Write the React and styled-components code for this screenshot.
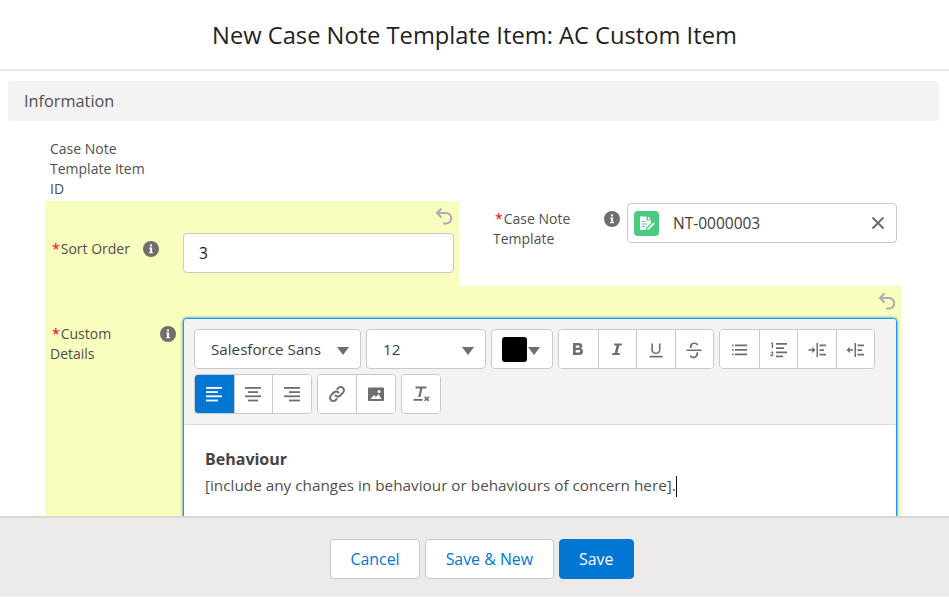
import React from 'react';
import styled, { createGlobalStyle } from 'styled-components';

const GlobalStyle = createGlobalStyle`
  html, body {
    margin: 0;
    padding: 0;
    background: #fff;
  }
  * { box-sizing: border-box; }
`;

const Page = styled.div`
  width: 949px;
  height: 597px;
  display: flex;
  flex-direction: column;
  overflow: hidden;
  font-family: "Open Sans", "Noto Sans", sans-serif;
  font-size: 14px;
  color: #3e3e3c;
`;

const Header = styled.header`
  height: 71px;
  flex: none;
  display: flex;
  align-items: center;
  justify-content: center;
  border-bottom: 2px solid #e5e5e5;

  h1 {
    margin: 0;
    font-size: 23.7px;
    font-weight: 400;
    line-height: 30px;
    color: #1f1f1f;
  }
`;

const Body = styled.main`
  flex: 1;
  min-height: 0;
  overflow: hidden;
  padding: 10px 10px 0 8px;
`;

const SectionTitle = styled.div`
  height: 40px;
  padding: 0 16px;
  display: flex;
  align-items: center;
  border-radius: 4px;
  background: #f3f3f3;
  font-size: 16.3px;
  color: #514f4d;
`;

const Form = styled.div`
  padding: 18px 0 0 37px;
`;

const IdLabel = styled.div`
  width: 110px;
  padding-left: 5px;
  height: 62px;
  line-height: 20px;
  color: #514f4d;
`;

const FieldRow = styled.div`
  display: flex;
  align-items: stretch;
`;

const Highlight = styled.div`
  background: #f9fdbd;
  padding: 6px 5px 0 5px;
  width: ${(p) => p.$width}px;
  height: ${(p) => p.$height}px;
  flex: none;
`;

const UndoRow = styled.div`
  height: 18px;
  margin-bottom: 8px;
  display: flex;
  justify-content: flex-end;
  padding-right: 1px;
  color: #b0adab;
`;

const Field = styled.div`
  display: flex;
  align-items: flex-start;
`;

const LabelCell = styled.div`
  width: ${(p) => p.$width}px;
  flex: none;
  display: flex;
  align-items: flex-start;
  justify-content: space-between;
  padding-top: 6px;
  margin-right: ${(p) => p.$gap}px;
`;

const LabelText = styled.label`
  line-height: 20px;
  color: #514f4d;
`;

const Star = styled.abbr`
  color: #ea001e;
  margin-left: 2px;
  margin-right: 1px;
  text-decoration: none;
`;

const InfoWrap = styled.span`
  display: flex;
  margin-top: 2px;
`;

const TextInput = styled.div`
  flex: 1;
  height: 40px;
  border: 1px solid #c9c9c9;
  border-radius: 4px;
  background: #fff;
  padding: 0 15px;
  display: flex;
  align-items: center;
  font-size: 15.5px;
  color: #181818;
`;

const RightField = styled.div`
  padding: 2px 0 0 34px;
  width: 438px;
  flex: none;
`;

const LookupInput = styled(TextInput)`
  padding: 0 11px 0 6px;
  justify-content: space-between;
  color: #3e3e3c;
`;

const LookupValue = styled.span`
  display: flex;
  align-items: center;
  gap: 14px;
`;

const ClearIcon = styled.span`
  display: flex;
  color: #706e6b;
`;

const Editor = styled.div`
  flex: 1;
  height: 300px;
  border: 1px solid #1b96ff;
  border-radius: 4px;
  box-shadow: 0 0 3px #0176d3;
  background: #fff;
  overflow: hidden;
`;

const Toolbar = styled.div`
  height: 106px;
  padding: 10px 10px 0;
  background: #f3f3f3;
  border-bottom: 1px solid #dddbda;
  display: flex;
  flex-wrap: wrap;
  align-content: flex-start;
  gap: 5px;
`;

const Select = styled.div`
  width: ${(p) => p.$width}px;
  height: 40px;
  border: 1px solid #c9c9c9;
  border-radius: 4px;
  background: #fff;
  display: flex;
  align-items: center;
  justify-content: space-between;
  padding: 0 11px 0 16px;
  font-size: 15.2px;
  color: #3e3e3c;
`;

const Caret = styled.span`
  width: 0;
  height: 0;
  margin-top: 3px;
  border-left: 6.5px solid transparent;
  border-right: 6.5px solid transparent;
  border-top: 8px solid #706e6b;
`;

const ColorSelect = styled(Select)`
  padding: 0 0 0 10px;
  justify-content: flex-start;
  gap: 1px;
`;

const Swatch = styled.span`
  width: 25px;
  height: 25px;
  border-radius: 3px;
  background: #000;
`;

const BtnGroup = styled.div`
  display: flex;
  height: 40px;
  border: 1px solid #c9c9c9;
  border-radius: 4px;
  background: #fff;
  overflow: hidden;
`;

const ToolBtn = styled.button`
  width: 38.5px;
  height: 100%;
  padding: 0;
  border: none;
  border-left: 1px solid #c9c9c9;
  background: ${(p) => (p.$active ? '#0176d3' : '#fff')};
  color: ${(p) => (p.$active ? '#fff' : '#706e6b')};
  display: flex;
  align-items: center;
  justify-content: center;

  &:first-child {
    border-left: none;
  }
`;

const EditorBody = styled.div`
  padding: 22px 21px;
  color: #444;
`;

const NoteHeading = styled.div`
  font-size: 16px;
  font-weight: 700;
  line-height: 24px;
`;

const NoteLine = styled.div`
  font-size: 15.3px;
  line-height: 28px;
  color: #514f4d;
`;

const Cursor = styled.span`
  display: inline-block;
  width: 1px;
  height: 21px;
  background: #111;
  vertical-align: middle;
`;

const Footer = styled.footer`
  height: 81px;
  flex: none;
  background: #ecebea;
  border-top: 2px solid #d8d8d8;
  border-bottom: 1px solid #f3f2f2;
  padding: 3px 0 0 15px;
  display: flex;
  align-items: center;
  justify-content: center;
  gap: 5px;
`;

const Button = styled.button`
  height: 40px;
  padding: 0 19.5px;
  border: 1px solid ${(p) => (p.$brand ? '#0176d3' : '#c9c9c9')};
  border-radius: 4px;
  background: ${(p) => (p.$brand ? '#0176d3' : '#fff')};
  color: ${(p) => (p.$brand ? '#fff' : '#0176d3')};
  font-family: inherit;
  font-size: 15.9px;
`;

const Svg = ({ children }) => (
  <svg width="20" height="20" viewBox="0 0 20 20" fill="currentColor" aria-hidden="true">
    {children}
  </svg>
);

const Undo = () => (
  <svg width="18" height="18" viewBox="0 0 18 18" fill="none" stroke="currentColor" strokeWidth="2">
    <path d="M6.5 1.5 2 6l4.5 4.5" />
    <path d="M2 6h9a5 5 0 0 1 0 10.5H8" />
  </svg>
);

const Info = () => (
  <svg width="16" height="16" viewBox="0 0 16 16">
    <circle cx="8" cy="8" r="8" fill="#706e6b" />
    <rect x="6.9" y="3.2" width="2.2" height="2.2" rx="1" fill="#fff" />
    <path d="M6.2 6.5h2.9v4.6h.8v1.2H6.2v-1.2h.8V7.7h-.8z" fill="#fff" />
  </svg>
);

const NoteIcon = () => (
  <svg width="25" height="25" viewBox="0 0 25 25">
    <rect width="25" height="25" rx="4" fill="#4bca81" />
    <path d="M6 5.500h6.500v4H17V12l-4.500 4.500-.7 2.500H6z" fill="#fff" />
    <path d="M14 5.500 17 8.500h-3z" fill="#fff" />
    <path d="M8 10.500h3M8 13h5M8 15.500h3" stroke="#4bca81" strokeWidth="1.200" />
    <path d="M19.500 11.500l1.300 1.300-5.800 5.800-1.700.4.400-1.700z" fill="#fff" />
  </svg>
);

const Cross = () => (
  <svg width="14" height="14" viewBox="0 0 14 14" stroke="currentColor" strokeWidth="2" fill="none">
    <path d="M1.500 1.500l11 11M12.500 1.500l-11 11" />
  </svg>
);

const Bold = () => (
  <Svg>
    <path fillRule="evenodd" d="M5 4h5.600c2.300 0 3.700 1.100 3.700 3 0 1.100-.6 2-1.500 2.500 1.300.5 2.200 1.500 2.200 2.900 0 2.200-1.600 3.600-4 3.600H5zm2.700 2.400v2.300h2.500c1 0 1.500-.4 1.500-1.200s-.5-1.100-1.500-1.100zm0 4.500v2.700h2.800c1.100 0 1.700-.5 1.700-1.400s-.6-1.300-1.700-1.300z" />
  </Svg>
);

const Italic = () => (
  <Svg>
    <path d="M7.200 4.500h7.600v2h-2.500l-1.900 7.500h2.400v2H5.200v-2h2.500l1.900-7.500H7.200z" />
  </Svg>
);

const Underline = () => (
  <Svg>
    <path d="M5.300 4.500h1.600v6.200c0 1.900 1.200 2.800 3 2.800s3-.9 3-2.800V4.500h1.600v6.300c0 2.800-1.900 4.200-4.600 4.200s-4.600-1.400-4.600-4.200zM3.500 16.800h13v1.700h-13z" />
  </Svg>
);

const Strike = () => (
  <Svg>
    <path d="M2.500 10.500h15v1.500h-15zM5.800 9.100C5.400 5.600 7.500 3.500 10.200 3.500c1.800 0 3.300.8 4.100 2.200l-1.400.9c-.5-1-1.500-1.500-2.600-1.500-1.800 0-2.900 1.500-2.500 4zM12.500 13.200h1.700c.3 3.500-1.700 6-4.400 6-1.800 0-3.300-.9-4.100-2.300l1.400-.9c.5 1 1.500 1.600 2.600 1.600 1.700 0 2.800-1.800 2.800-4.400z" />
  </Svg>
);

const BulletList = () => (
  <Svg>
    <path d="M6 5.500h12v1.800H6zM6 10h12v1.800H6zM6 14.500h12v1.800H6zM3 5.500h1.600v1.800H3zM3 10h1.600v1.800H3zM3 14.500h1.600v1.800H3z" />
  </Svg>
);

const NumberList = () => (
  <Svg>
    <path d="M8 4h11v1.700H8zM8 8.300h8v1.700H8zM8 12.500h11v1.700H8zM8 16.600h7v1.700H8zM3.600 3.500H5v5.400H3.800V4.700H3zM2.400 13.300c.4-.5 1-.7 1.500-.7.900 0 1.500.5 1.500 1.300 0 .9-.9 1.600-1.800 2.400h1.900v1H2.300v-.9c1-.9 1.900-1.600 1.900-2.300 0-.3-.2-.5-.5-.5s-.5.1-.8.4z" />
  </Svg>
);

const IndentIcon = ({ flip }) => (
  <Svg>
    <path d="M9.500 4H11v14H9.500zM12.500 5.500H19v1.700h-6.500zM12.500 10.200H17v1.700h-4.500zM12.500 14.800H19v1.700h-6.500z" />
    {flip ? (
      <path d="M8 10.200H4.800V8L1.500 11l3.300 3v-2.200H8z" />
    ) : (
      <path d="M1.500 10.200h3.700V8L8.500 11l-3.300 3v-2.200H1.500z" />
    )}
  </Svg>
);

const AlignIcon = ({ kind }) => {
  const short = { left: [2, 12], center: [5, 10], right: [7, 11] }[kind];
  return (
    <Svg>
      <rect x="2" y="3" width="16" height="1.800" />
      <rect x={short[0]} y="7.200" width={short[1]} height="1.800" />
      <rect x="2" y="11.400" width="16" height="1.800" />
      <rect x={short[0]} y="15.600" width={short[1]} height="1.800" />
    </Svg>
  );
};

const LinkIcon = () => (
  <svg width="20" height="20" viewBox="0 0 20 20" fill="none" stroke="currentColor" strokeWidth="1.900" strokeLinecap="round">
    <path d="M8.500 11.500a3.200 3.200 0 0 0 4.700 0l2.800-2.800a3.300 3.300 0 0 0-4.700-4.700l-1 1" />
    <path d="M11.500 8.500a3.200 3.200 0 0 0-4.700 0L4 11.300A3.300 3.300 0 0 0 8.700 16l1-1" />
  </svg>
);

const ImageIcon = () => (
  <Svg>
    <path fillRule="evenodd" d="M3 3.500h14a1 1 0 0 1 1 1v11.500a1 1 0 0 1-1 1H3a1 1 0 0 1-1-1V4.500a1 1 0 0 1 1-1zm1.500 11.500h11l-3-5-2.500 3-2-2zM13 6a1.500 1.500 0 1 0 0 3 1.500 1.500 0 0 0 0-3z" />
  </Svg>
);

const ClearFormat = () => (
  <Svg>
    <path d="M4.500 2.500h11v2H11.400l-2 8.500H7.200l2-8.500H4.500zM2.500 15h9v1.800h-9zM13 13.200l1.200-.9 1.500 1.400 1.500-1.400 1.200.9-1.500 1.600 1.500 1.600-1.200.9-1.500-1.400-1.500 1.400-1.200-.9 1.500-1.600z" />
  </Svg>
);

const App = () => {
  return (
    <Page>
      <GlobalStyle />
      <Header>
        <h1>New Case Note Template Item: AC Custom Item</h1>
      </Header>

      <Body>
        <SectionTitle>Information</SectionTitle>
        <Form>
          <IdLabel>Case Note Template Item ID</IdLabel>

          <FieldRow>
            <Highlight $width={414} $height={85}>
              <UndoRow><Undo /></UndoRow>
              <Field>
                <LabelCell $width={109} $gap={24}>
                  <LabelText><Star>*</Star>Sort Order</LabelText>
                  <InfoWrap><Info /></InfoWrap>
                </LabelCell>
                <TextInput>3</TextInput>
              </Field>
            </Highlight>

            <RightField>
              <Field>
                <LabelCell $width={127} $gap={7}>
                  <LabelText><Star>*</Star>Case Note<br />Template</LabelText>
                  <InfoWrap><Info /></InfoWrap>
                </LabelCell>
                <LookupInput>
                  <LookupValue><NoteIcon />NT-0000003</LookupValue>
                  <ClearIcon><Cross /></ClearIcon>
                </LookupInput>
              </Field>
            </RightField>
          </FieldRow>

          <Highlight $width={857} $height={230}>
            <UndoRow><Undo /></UndoRow>
            <Field>
              <LabelCell $width={126} $gap={7}>
                <LabelText><Star>*</Star>Custom<br />Details</LabelText>
                <InfoWrap><Info /></InfoWrap>
              </LabelCell>
              <Editor>
                <Toolbar>
                  <Select $width={167}>Salesforce Sans<Caret /></Select>
                  <Select $width={120}>12<Caret /></Select>
                  <ColorSelect $width={62}><Swatch /><Caret /></ColorSelect>
                  <BtnGroup>
                    <ToolBtn><Bold /></ToolBtn>
                    <ToolBtn><Italic /></ToolBtn>
                    <ToolBtn><Underline /></ToolBtn>
                    <ToolBtn><Strike /></ToolBtn>
                  </BtnGroup>
                  <BtnGroup>
                    <ToolBtn><BulletList /></ToolBtn>
                    <ToolBtn><NumberList /></ToolBtn>
                    <ToolBtn><IndentIcon /></ToolBtn>
                    <ToolBtn><IndentIcon flip /></ToolBtn>
                  </BtnGroup>
                  <BtnGroup>
                    <ToolBtn $active><AlignIcon kind="left" /></ToolBtn>
                    <ToolBtn><AlignIcon kind="center" /></ToolBtn>
                    <ToolBtn><AlignIcon kind="right" /></ToolBtn>
                  </BtnGroup>
                  <BtnGroup>
                    <ToolBtn><LinkIcon /></ToolBtn>
                    <ToolBtn><ImageIcon /></ToolBtn>
                  </BtnGroup>
                  <BtnGroup>
                    <ToolBtn><ClearFormat /></ToolBtn>
                  </BtnGroup>
                </Toolbar>
                <EditorBody>
                  <NoteHeading>Behaviour</NoteHeading>
                  <NoteLine>[include any changes in behaviour or behaviours of concern here].<Cursor /></NoteLine>
                </EditorBody>
              </Editor>
            </Field>
          </Highlight>
        </Form>
      </Body>

      <Footer>
        <Button>Cancel</Button>
        <Button>Save &amp; New</Button>
        <Button $brand>Save</Button>
      </Footer>
    </Page>
  );
};

export default App;
